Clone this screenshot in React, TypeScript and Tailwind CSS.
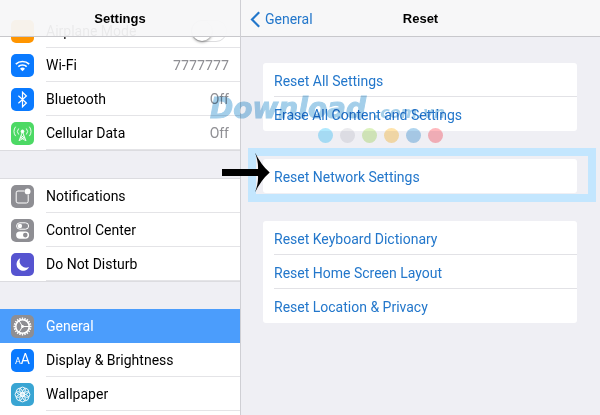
import type { ReactNode } from "react";
import { clsx } from "clsx";

type Item = {
  label: string;
  value?: string;
  valueClass?: string;
  color: string;
  icon: ReactNode;
  active?: boolean;
};

const petals = [0, 45, 90, 135, 180, 225, 270, 315];
const teeth = Array.from({ length: 20 }, (_, i) => i * 18);

const WifiIcon = (
  <svg viewBox="0 0 23 23" className="size-full" fill="none" stroke="white" strokeWidth="1.7">
    <path d="M4.8 10.2a9.6 9.6 0 0 1 13.4 0" />
    <path d="M7.3 12.7a6 6 0 0 1 8.4 0" />
    <path d="M11.5 17.2 9 14.7a3.5 3.5 0 0 1 5 0z" fill="white" stroke="none" />
  </svg>
);

const BluetoothIcon = (
  <svg viewBox="0 0 23 23" className="size-full" fill="none" stroke="white" strokeWidth="1.2">
    <path d="M7.4 7.8l8 7.2-3.9 3.8V4.2l3.9 3.8-8 7.2" />
  </svg>
);

const CellularIcon = (
  <svg viewBox="0 0 23 23" className="size-full" fill="none" stroke="white" strokeWidth="0.9">
    <circle cx="11.5" cy="9.4" r="1.4" fill="white" />
    <path d="M11.5 9.5 8 19M11.5 9.5 15 19M10 13.5l4 3M13 13.5l-4 3M8.4 18.6l5.2-3.2M14.6 18.6l-5.2-3.2" />
    <path d="M7.7 6.5a4.4 4.4 0 0 0 0 6M4.6 4.7a8.2 8.2 0 0 0 0 9.4" />
    <path d="M15.3 6.5a4.4 4.4 0 0 1 0 6M18.4 4.7a8.2 8.2 0 0 1 0 9.4" />
  </svg>
);

const NotificationsIcon = (
  <svg viewBox="0 0 23 23" className="size-full" fill="none" stroke="white">
    <path d="M13.5 6H7a1.8 1.8 0 0 0-1.8 1.8v8.4A1.8 1.8 0 0 0 7 18h8.4a1.8 1.8 0 0 0 1.8-1.8V9.6" />
    <circle cx="16.6" cy="6.4" r="2.9" fill="white" stroke="none" />
  </svg>
);

const ControlCenterIcon = (
  <svg viewBox="0 0 23 23" className="size-full" fill="none" stroke="white">
    <rect x="5.6" y="3.8" width="12" height="6.4" rx="3.2" />
    <circle cx="8.9" cy="7" r="2.2" fill="white" stroke="none" />
    <rect x="5.1" y="12.4" width="13" height="7.4" rx="3.7" fill="white" stroke="none" />
    <circle cx="14.3" cy="16.1" r="2.3" fill="#8e8e93" stroke="none" />
  </svg>
);

const MoonIcon = (
  <svg viewBox="0 0 23 23" className="size-full">
    <path d="M9.3 5.2a6.6 6.6 0 1 0 8.8 8.8 6.6 6.6 0 0 1-8.800-8.800z" fill="white" />
  </svg>
);

const GearIcon = (
  <svg viewBox="0 0 23 23" className="size-full" fill="none" stroke="white">
    <circle cx="11.5" cy="11.5" r="6.7" strokeWidth="1.5" />
    {teeth.map((a) => (
      <path key={a} d="M11.5 2.5v2.2" strokeWidth="1.4" transform={`rotate(${a} 11.5 11.5)`} />
    ))}
    <path d="M11.5 11.5h6.5M11.5 11.5 8.2 5.9M11.5 11.5l-3.3 5.6" strokeWidth="1" />
    <circle cx="11.5" cy="11.5" r="1.4" fill="white" stroke="none" />
  </svg>
);

const DisplayIcon = (
  <span className="flex items-baseline text-white">
    <span className="text-[9px] leading-4">A</span>
    <span className="text-[14px] leading-4">A</span>
  </span>
);

const WallpaperIcon = (
  <svg viewBox="0 0 23 23" className="size-full" fill="none" stroke="white" strokeWidth="0.9">
    {petals.map((a) => (
      <circle key={a} cx="11.5" cy="7" r="2.9" transform={`rotate(${a} 11.5 11.5)`} />
    ))}
    <circle cx="11.5" cy="11.5" r="1.8" fill="white" fillOpacity="0.6" />
  </svg>
);

const network: Item[] = [
  {
    label: "Wi-Fi",
    value: "7777777",
    valueClass: "font-['Noto_Sans',sans-serif]",
    color: "bg-[#0a7aff]",
    icon: WifiIcon,
  },
  { label: "Bluetooth", value: "Off", color: "bg-[#0a7aff]", icon: BluetoothIcon },
  { label: "Cellular Data", value: "Off", color: "bg-[#4cd964]", icon: CellularIcon },
];

const alerts: Item[] = [
  { label: "Notifications", color: "bg-[#8e8e93]", icon: NotificationsIcon },
  { label: "Control Center", color: "bg-[#8e8e93]", icon: ControlCenterIcon },
  { label: "Do Not Disturb", color: "bg-[#5654d0]", icon: MoonIcon },
];

const device: Item[] = [
  { label: "General", color: "bg-[#8e8e93]", icon: GearIcon, active: true },
  { label: "Display & Brightness", color: "bg-[#0a7aff]", icon: DisplayIcon },
  { label: "Wallpaper", color: "bg-[#39a5d3]", icon: WallpaperIcon },
];

const dots = ["bg-[#b0e9fe]", "bg-[#ebebee]", "bg-[#dcf2be]", "bg-[#ffe4ac]", "bg-[#b0d5ef]", "bg-[#ffb8bd]"];

function IconTile({ color, children }: { color: string; children?: ReactNode }) {
  return (
    <span className={clsx("flex size-[23px] shrink-0 items-center justify-center overflow-hidden rounded-[5px]", color)}>
      {children}
    </span>
  );
}

function SidebarRow({ item }: { item: Item }) {
  return (
    <li>
      <a
        href="#"
        className={clsx("flex h-[34px] items-center gap-3 pl-[11px]", item.active ? "bg-[#4b9dfc] text-white" : "text-black")}
      >
        <IconTile color={item.color}>{item.icon}</IconTile>
        <span
          className={clsx(
            "flex h-full min-w-0 flex-1 items-center justify-between border-b pr-[11px]",
            item.active ? "border-transparent" : "border-[#e4e4e7]"
          )}
        >
          <span className="truncate">{item.label}</span>
          {item.value && <span className={clsx("text-[#8e8e93]", item.valueClass)}>{item.value}</span>}
        </span>
      </a>
    </li>
  );
}

function ResetCard({ options, children }: { options: string[]; children?: ReactNode }) {
  return (
    <div className="relative rounded-[3px] bg-white pl-[11px]">
      <ul className="divide-y divide-[#e2e2e6]">
        {options.map((option) => (
          <li key={option} className="h-[34px]">
            <button type="button" className="flex h-full w-full items-center pt-0.5 text-left text-[#2377cb]">
              {option}
            </button>
          </li>
        ))}
      </ul>
      {children}
    </div>
  );
}

function Watermark() {
  return (
    <div className="pointer-events-none absolute top-[94px] left-[210px] z-20 mix-blend-multiply" aria-hidden="true">
      <div className="flex items-baseline gap-2 font-['DejaVu_Sans',sans-serif] font-bold text-[#a4cfea] italic">
        <span className="text-[28px] leading-[30px] [-webkit-text-stroke:1px_#a4cfea]">Download</span>
        <span className="text-[16px] leading-[30px]">.com.vn</span>
      </div>
      <div className="ml-[108px] flex gap-[7px]">
        {dots.map((dot) => (
          <span key={dot} className={clsx("size-[15px] rounded-full", dot)} />
        ))}
      </div>
    </div>
  );
}

export default function App() {
  return (
    <div className="relative flex h-screen overflow-hidden bg-[#efeff4] font-[Roboto,'Liberation_Sans',sans-serif] text-[14px] leading-5">
      <aside className="flex w-2/5 flex-col">
        <header className="z-10 flex h-[37px] shrink-0 items-center justify-center border-b border-[#c8c8cc] bg-[#f7f7f8]/95 pt-0.5">
          <h1 className="font-['Liberation_Sans',Arial,sans-serif] text-[13px] font-bold">Settings</h1>
        </header>
        {/* list is scrolled a little under the translucent header */}
        <nav className="-mt-[23px] flex flex-1 flex-col">
          <ul className="border-b border-[#dcdce0] bg-white">
            <li className="flex h-[34px] items-center gap-3 pl-[11px]">
              <IconTile color="bg-[#ff9500]" />
              <label className="flex h-full flex-1 items-center justify-between border-b border-[#e4e4e7] pr-[13px]">
                Airplane Mode
                <input
                  type="checkbox"
                  className="h-[22px] w-9 appearance-none rounded-full border border-[#dddddf] bg-white before:block before:size-5 before:rounded-full before:bg-white before:shadow-[0_1px_3px_rgba(0,0,0,0.5)]"
                />
              </label>
            </li>
            {network.map((item) => (
              <SidebarRow key={item.label} item={item} />
            ))}
          </ul>
          <ul className="mt-[27px] border-y border-[#dcdce0] bg-white">
            {alerts.map((item) => (
              <SidebarRow key={item.label} item={item} />
            ))}
          </ul>
          <ul className="mt-[27px] flex-1 bg-white">
            {device.map((item) => (
              <SidebarRow key={item.label} item={item} />
            ))}
          </ul>
        </nav>
      </aside>

      <main className="z-10 flex flex-1 flex-col border-l border-[#cfcfd4]">
        <header className="grid h-[37px] shrink-0 grid-cols-3 items-center border-b border-[#c8c8cc] bg-[#f7f7f8] pt-0.5">
          <a href="#" className="flex items-center gap-1 pl-[9px] text-[#2377cb]">
            <svg viewBox="0 0 11 17" className="h-[17px] w-[11px]" fill="none" stroke="currentColor" strokeWidth="2.2">
              <path d="M9.2 1.2 2 8.5l7.2 7.3" />
            </svg>
            General
          </a>
          <h2 className="text-center font-['Liberation_Sans',Arial,sans-serif] text-[13px] font-bold">Reset</h2>
        </header>

        <div className="flex flex-col gap-7 pt-[26px] pr-[23px] pl-[22px]">
          <ResetCard options={["Reset All Settings", "Erase All Content and Settings"]} />
          <ResetCard options={["Reset Network Settings"]}>
            <div className="pointer-events-none absolute -top-[11px] -right-[19px] -bottom-[9px] -left-[15px] border-8 border-[#c3e6fe]" />
            <svg viewBox="0 0 48 41" className="pointer-events-none absolute -top-[7px] -left-[41px] h-[41px] w-12">
              <path d="M0 17h36Q36.5 10 33 0.500Q39 13 47.700 20.500Q39 28 33 40.500Q36.500 31 36 24H0z" fill="black" />
            </svg>
          </ResetCard>
          <ResetCard options={["Reset Keyboard Dictionary", "Reset Home Screen Layout", "Reset Location & Privacy"]} />
        </div>
      </main>

      <Watermark />
    </div>
  );
}
